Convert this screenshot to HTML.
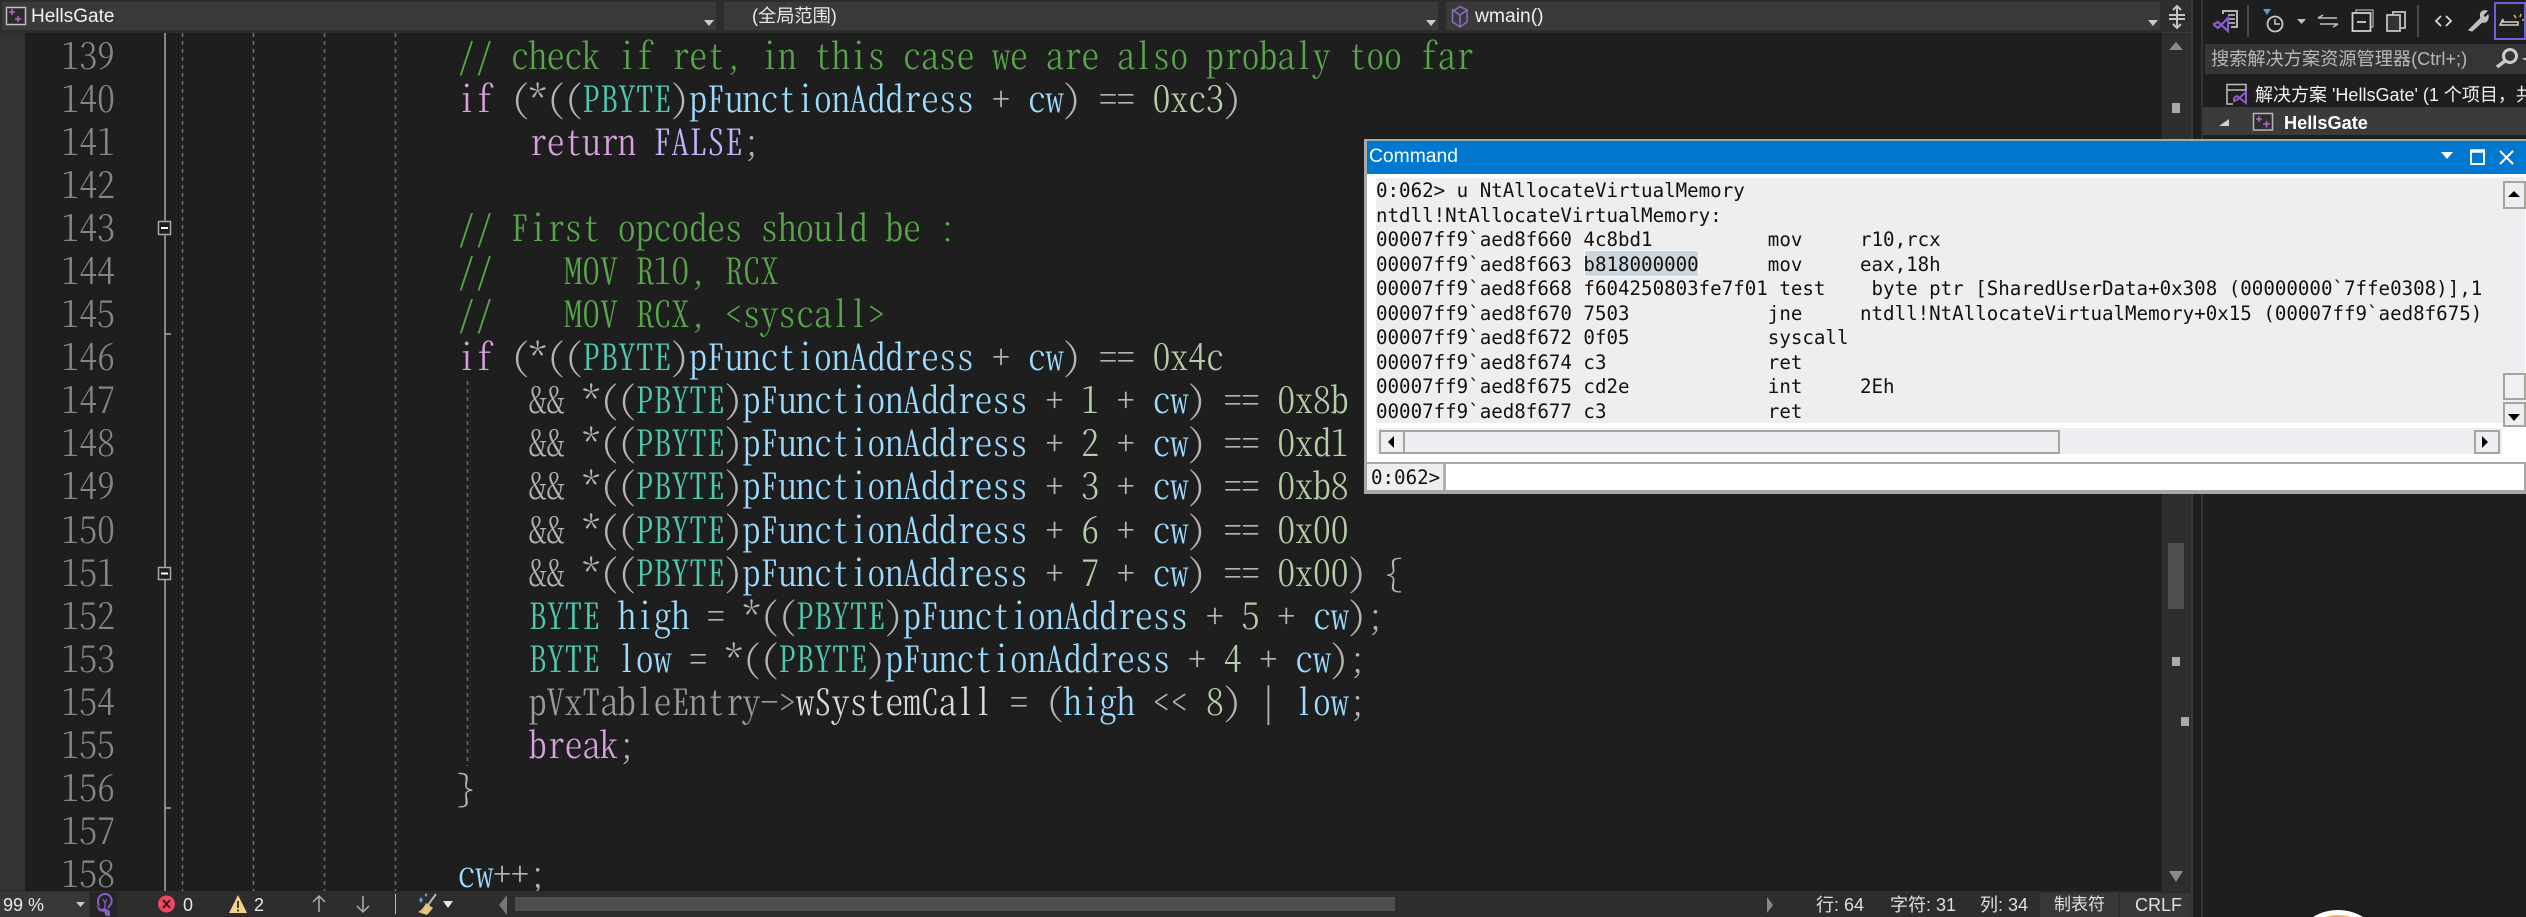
<!DOCTYPE html>
<html lang="zh"><head><meta charset="utf-8"><title>HellsGate</title>
<style>
html,body{margin:0;padding:0;width:2526px;height:917px;overflow:hidden;background:#1e1e1e}
.a{position:absolute}
body{position:relative;font-family:"Liberation Sans","Noto Sans CJK SC",sans-serif}
#page{position:absolute;left:0;top:0;width:2526px;height:917px;overflow:hidden}
.t{position:absolute;white-space:pre;line-height:1}
#nums,#code{position:absolute;top:0;font-family:"Noto Serif CJK SC",serif;font-feature-settings:"hwid";font-size:35.65px;font-weight:300;line-height:43.05px;white-space:pre}
#nums{left:61.5px;color:#858585}
#code{left:457.5px;color:#b4b4b4}
.c{color:#57a64a}.k{color:#d8a0df}.m{color:#beb7ff}.y{color:#4ec9b0}.v{color:#9cdcfe}.n{color:#b5cea8}.d{color:#9b9b9b}.w{color:#dadada}
#cmd{position:absolute;left:1376px;top:179px;font-family:"DejaVu Sans Mono","Liberation Mono",monospace;font-size:19.15px;line-height:24.55px;color:#111;white-space:pre}
.box{position:absolute;box-sizing:border-box;border:2px solid #a8a49c;background:#edeef2}
</style></head><body><div id="page">
<!-- top bar -->
<div class="a" style="left:0;top:0;width:2162px;height:33px;background:#2d2d2d"></div>
<div class="a" style="left:2px;top:2px;width:714px;height:28px;background:#3a3a3a"></div>
<div class="a" style="left:724px;top:2px;width:714px;height:28px;background:#3a3a3a"></div>
<div class="a" style="left:1446px;top:2px;width:714px;height:28px;background:#3a3a3a"></div>
<div class="t" style="left:31px;top:7px;font-size:19px;color:#f0f0f0">HellsGate</div>
<div class="t" style="left:752px;top:7px;font-size:18.2px;color:#e8e8e8">(全局范围)</div>
<div class="t" style="left:1475px;top:7px;font-size:19.3px;color:#f0f0f0">wmain()</div>

<!-- margins -->
<div class="a" style="left:0;top:33px;width:25px;height:858px;background:#333"></div>

<!-- editor graphics -->
<svg class="a" style="left:0;top:0" width="2526" height="917" viewBox="0 0 2526 917">
<g stroke="#6e6e6e" stroke-width="1.5" stroke-dasharray="4 4" fill="none">
<path d="M182.500 33V891M253.500 33V891M324.500 33V891M395.500 33V891M467.500 381V766"/>
</g>
<g stroke="#a8a8a8" stroke-width="1.500" fill="none">
<path d="M165 33V221M165 234V567M165 579V891M165 334H171M165 808H171"/>
<rect x="158.500" y="221.500" width="12" height="13"/>
<rect x="158.500" y="567.500" width="12" height="12"/>
</g>
<path d="M161 228H168M161 573.500H168" stroke="#fff" stroke-width="2"/>
<!-- small top icons -->
<rect x="6.500" y="7.500" width="19" height="17" fill="#2b2b2b" stroke="#c0c0c0" stroke-width="1.500"/>
<path d="M9 12H15M12 9V15M15 19H21M18 16V22" stroke="#b765cf" stroke-width="1.500"/>
<path d="M1455 12L1460 8.500L1467 12V24L1460 29L1452.500 24V12ZM1452.500 12L1460 17V29M1460 17L1467 12" transform="translate(0 -2)" fill="none" stroke="#8c6cc4" stroke-width="1.500"/>
<path d="M704 21H714L709 27Z" transform="translate(0 -1)" fill="#ccc"/>
<path d="M1426 21H1436L1431 27Z" transform="translate(0 -1)" fill="#ccc"/>
<path d="M2148 21H2158L2153 27Z" transform="translate(0 -1)" fill="#ccc"/>
</svg>

<!-- code -->
<div class="a" style="left:0;top:33px;width:2162px;height:858px;overflow:hidden">
<div id="nums">139
140
141
142
143
144
145
146
147
148
149
150
151
152
153
154
155
156
157
158</div>
<div id="code"><span class="c">// check if ret, in this case we are also probaly too far</span>
<span class="k">if</span> (*((<span class="y">PBYTE</span>)<span class="v">pFunctionAddress</span> + <span class="v">cw</span>) == <span class="n">0xc3</span>)
    <span class="k">return</span> <span class="m">FALSE</span>;

<span class="c">// First opcodes should be :</span>
<span class="c">//    MOV R10, RCX</span>
<span class="c">//    MOV RCX, &lt;syscall&gt;</span>
<span class="k">if</span> (*((<span class="y">PBYTE</span>)<span class="v">pFunctionAddress</span> + <span class="v">cw</span>) == <span class="n">0x4c</span>
    &amp;&amp; *((<span class="y">PBYTE</span>)<span class="v">pFunctionAddress</span> + <span class="n">1</span> + <span class="v">cw</span>) == <span class="n">0x8b</span>
    &amp;&amp; *((<span class="y">PBYTE</span>)<span class="v">pFunctionAddress</span> + <span class="n">2</span> + <span class="v">cw</span>) == <span class="n">0xd1</span>
    &amp;&amp; *((<span class="y">PBYTE</span>)<span class="v">pFunctionAddress</span> + <span class="n">3</span> + <span class="v">cw</span>) == <span class="n">0xb8</span>
    &amp;&amp; *((<span class="y">PBYTE</span>)<span class="v">pFunctionAddress</span> + <span class="n">6</span> + <span class="v">cw</span>) == <span class="n">0x00</span>
    &amp;&amp; *((<span class="y">PBYTE</span>)<span class="v">pFunctionAddress</span> + <span class="n">7</span> + <span class="v">cw</span>) == <span class="n">0x00</span>) {
    <span class="y">BYTE</span> <span class="v">high</span> = *((<span class="y">PBYTE</span>)<span class="v">pFunctionAddress</span> + <span class="n">5</span> + <span class="v">cw</span>);
    <span class="y">BYTE</span> <span class="v">low</span> = *((<span class="y">PBYTE</span>)<span class="v">pFunctionAddress</span> + <span class="n">4</span> + <span class="v">cw</span>);
    <span class="d">pVxTableEntry-&gt;</span><span class="w">wSystemCall</span> = (<span class="v">high</span> &lt;&lt; <span class="n">8</span>) | <span class="v">low</span>;
    <span class="k">break</span>;
}

<span class="v">cw</span>++;</div>
</div>

<!-- editor vertical scrollbar -->
<div class="a" style="left:2162px;top:0;width:29px;height:891px;background:#2e2e2e"></div>
<div class="a" style="left:2162px;top:32px;width:29px;height:1px;background:#3a3a3a"></div>
<div class="a" style="left:2191px;top:0;width:2px;height:917px;background:#3a3a3a"></div>
<div class="a" style="left:2201px;top:0;width:2px;height:917px;background:#333"></div>
<div class="a" style="left:2168px;top:543px;width:16px;height:66px;background:#4f4f4f"></div>
<div class="a" style="left:2172px;top:103px;width:8px;height:10px;background:#aaa"></div>
<div class="a" style="left:2172px;top:657px;width:8px;height:9px;background:#aaa"></div>
<div class="a" style="left:2181px;top:717px;width:8px;height:9px;background:#aaa"></div>
<svg class="a" style="left:2162px;top:0" width="29" height="891" viewBox="0 0 29 891">
<path d="M7 50H21L14 42Z" fill="#8a8a8a"/>
<path d="M7 871H21L14 882Z" fill="#8a8a8a"/>
<path d="M15 6V28M7 15H23M7 19H23M11 10L15 6L19 10M11 24L15 28L19 24" stroke="#c4c4c4" stroke-width="2" fill="none"/>
</svg>

<!-- solution explorer -->
<div class="a" style="left:2205px;top:44px;width:321px;height:30px;background:#353535"></div>
<div class="t" style="left:2211px;top:50px;font-size:18.2px;color:#b8b8b8">搜索解决方案资源管理器(Ctrl+;)</div>
<div class="a" style="left:2203px;top:107px;width:323px;height:28px;background:#3b3b3b"></div>
<div class="a" style="left:2203px;top:76px;width:323px;height:31px;overflow:hidden"><div class="t" style="left:52px;top:10px;font-size:18px;color:#f0f0f0">解决方案 'HellsGate' (1 个项目，共 1 个)</div></div>
<div class="t" style="left:2284px;top:114px;font-size:18.2px;font-weight:bold;color:#fff">HellsGate</div>
<svg class="a" style="left:2203px;top:0" width="323" height="140" viewBox="2203 0 323 140">
<!-- VS doc icon -->
<path d="M2223 14V11H2237V27H2231" fill="none" stroke="#c8c8c8" stroke-width="1.800"/>
<path d="M2228 15H2235M2228 19H2235M2228 23H2235" stroke="#c8c8c8" stroke-width="1.500"/>
<path d="M2214 24L2218 22L2228 31V18L2218 28L2214 25Z" fill="none" stroke="#8a5cc9" stroke-width="2.200"/>
<path d="M2248 5V37" stroke="#4a4a4a" stroke-width="2"/>
<!-- clock -->
<path d="M2263 9H2271L2267 15Z" fill="#4aa3e0"/>
<circle cx="2275" cy="24" r="7.500" fill="none" stroke="#c8c8c8" stroke-width="1.800"/>
<path d="M2275 19V24H2280" fill="none" stroke="#c8c8c8" stroke-width="1.500"/>
<path d="M2297 19H2306L2301.500 24Z" fill="#c0c0c0"/>
<!-- sync -->
<path d="M2318 18H2337M2318 18L2323 15M2320 24H2338M2338 24L2333 27" fill="none" stroke="#c0c0c0" stroke-width="1.500"/>
<!-- collapse -->
<path d="M2356 13V10H2373V27H2370" fill="none" stroke="#aaa" stroke-width="1.300"/>
<rect x="2352.500" y="13" width="18" height="18" fill="none" stroke="#d0d0d0" stroke-width="1.800"/>
<path d="M2357 22H2366" stroke="#d0d0d0" stroke-width="1.800"/>
<!-- copies -->
<rect x="2393" y="12" width="12" height="16" fill="none" stroke="#c0c0c0" stroke-width="1.800"/>
<rect x="2387" y="15" width="13" height="16" fill="#333" stroke="#c0c0c0" stroke-width="1.800"/>
<path d="M2418 5V37" stroke="#4a4a4a" stroke-width="2"/>
<path d="M2441 16L2436 21L2441 26M2446 16L2451 21L2446 26" fill="none" stroke="#d8d8d8" stroke-width="1.800"/>
<!-- wrench -->
<path d="M2469 30L2481 18C2479 13 2482 10 2487 11L2483 15L2485 18L2488 15C2489 20 2486 23 2482 22L2472 31Z" fill="#bbb" stroke="#ccc"/>
<rect x="2495" y="3" width="30" height="36" fill="none" stroke="#6a60d8" stroke-width="2"/>
<path d="M2500 25H2518V22H2503V19L2500 25Z" fill="none" stroke="#d0d0d0" stroke-width="1.500"/>
<path d="M2514 15L2516 18M2522 20H2524M2521 14L2520 17" stroke="#e8c060" stroke-width="1.500"/>
<!-- search -->
<circle cx="2510" cy="56" r="6.500" fill="none" stroke="#ccc" stroke-width="3"/>
<path d="M2505 61L2497 67" stroke="#ccc" stroke-width="3.500"/>
<path d="M2522 58H2526V60H2524Z" fill="#bbb"/>
<!-- solution icon -->
<path d="M2246 94V84.500H2227V104H2233M2227 90H2246" fill="none" stroke="#bdbdbd" stroke-width="1.500"/>
<path d="M2234 98L2237 96L2246 103V92L2237 100L2234 101Z" fill="none" stroke="#8a5cc9" stroke-width="2"/>
<!-- triangle -->
<path d="M2229 119V126H2219Z" fill="#cfcfcf"/>
<!-- project icon -->
<rect x="2253.500" y="113.500" width="19" height="16.500" fill="#2d2d2d" stroke="#b8b8b8" stroke-width="1.500"/>
<path d="M2256 119H2262M2259 116V122M2263 124H2270M2266.500 121V127.500" stroke="#b765cf" stroke-width="1.500"/>
</svg>

<!-- avatar top edge, drawn only down to the frame bottom -->
<svg class="a" style="left:2300px;top:905px" width="76" height="12" viewBox="2300 905 76 12">
<path d="M2313 917A48 48 0 0 1 2363 917Z" fill="#fff"/>
<path d="M2325 917A43 43 0 0 1 2351 917Z" fill="#f7b26a"/>
</svg>

<!-- Command window -->
<div class="a" style="left:1364px;top:139px;width:1162px;height:355px;background:#fff;box-sizing:border-box;border:solid #a8a8a8;border-width:2px 0 4px 3px"></div>
<div class="a" style="left:1367px;top:141px;width:1159px;height:33px;background:#0078cf"></div>
<div class="t" style="left:1369px;top:147px;font-size:19.3px;color:#fff">Command</div>
<svg class="a" style="left:2430px;top:141px" width="96" height="33" viewBox="2430 141 96 33">
<path d="M2441 152H2453L2447 159Z" fill="#fff"/>
<rect x="2471" y="151" width="13" height="13" fill="none" stroke="#fff" stroke-width="2"/>
<path d="M2470 151H2485" stroke="#fff" stroke-width="3.500"/>
<path d="M2500 151L2513 164M2513 151L2500 164" stroke="#fff" stroke-width="2"/>
</svg>
<div class="a" style="left:1376px;top:178px;width:1127px;height:245px;background:#eee"></div>
<div class="a" style="left:1584px;top:250px;width:115px;height:27px;box-sizing:border-box;border:1px solid #fafafa;background:#cdd6dd"></div>
<div id="cmd">0:062&gt; u NtAllocateVirtualMemory
ntdll!NtAllocateVirtualMemory:
00007ff9`aed8f660 4c8bd1          mov     r10,rcx
00007ff9`aed8f663 b818000000      mov     eax,18h
00007ff9`aed8f668 f604250803fe7f01 test    byte ptr [SharedUserData+0x308 (00000000`7ffe0308)],1
00007ff9`aed8f670 7503            jne     ntdll!NtAllocateVirtualMemory+0x15 (00007ff9`aed8f675)
00007ff9`aed8f672 0f05            syscall
00007ff9`aed8f674 c3              ret
00007ff9`aed8f675 cd2e            int     2Eh
00007ff9`aed8f677 c3              ret</div>
<!-- cmd vscroll -->
<div class="a" style="left:2503px;top:177px;width:22px;height:250px;background:#edeef2"></div>
<div class="box" style="left:2503px;top:181px;width:23px;height:28px"></div>
<div class="box" style="left:2503px;top:373px;width:23px;height:27px;background:#f0f0f4"></div>
<div class="box" style="left:2503px;top:402px;width:23px;height:25px"></div>
<svg class="a" style="left:2503px;top:177px" width="23" height="250" viewBox="0 0 23 250">
<path d="M5 20H17L11 14Z" fill="#000"/>
<path d="M5 237H17L11 244Z" fill="#000"/>
</svg>
<!-- cmd hscroll -->
<div class="a" style="left:1376px;top:428px;width:1126px;height:26px;background:#edeef2"></div>
<div class="box" style="left:1379px;top:430px;width:26px;height:24px"></div>
<div class="box" style="left:1403px;top:430px;width:657px;height:24px"></div>
<div class="box" style="left:2474px;top:430px;width:26px;height:24px"></div>
<svg class="a" style="left:1379px;top:430px" width="1121" height="24" viewBox="0 0 1121 24">
<path d="M15 6V18L9 12Z" fill="#000"/>
<path d="M1103 6V18L1109 12Z" fill="#000"/>
</svg>
<!-- cmd input -->
<div class="a" style="left:1367px;top:462px;width:1159px;height:2px;background:#a8a8a8"></div>
<div class="a" style="left:1367px;top:464px;width:76px;height:26px;background:#eee"></div>
<div class="a" style="left:1443px;top:464px;width:3px;height:26px;background:#b0b0b0"></div>
<div class="a" style="left:2524px;top:464px;width:2px;height:26px;background:#a8a8a8"></div>
<div class="t" style="left:1371px;top:468px;font-family:'DejaVu Sans Mono',monospace;font-size:19.15px;color:#111">0:062&gt;</div>

<!-- status bar -->
<div class="a" style="left:0;top:891px;width:2191px;height:26px;background:#2d2d2d;overflow:hidden">
<div class="a" style="left:0;top:1px;width:89px;height:25px;background:#383838"></div>
<div class="a" style="left:90px;top:1px;width:27px;height:25px;background:#252525"></div>
<div class="a" style="left:515px;top:6px;width:880px;height:14px;background:#4f4f4f"></div>
<div class="a" style="left:2040px;top:2px;width:78px;height:24px;background:#383838"></div>
<div class="a" style="left:2120px;top:2px;width:70px;height:24px;background:#383838"></div>
<div class="t" style="left:3px;top:5px;font-size:18px;color:#e8e8e8">99 %</div>
<div class="t" style="left:183px;top:5px;font-size:18px;color:#e8e8e8">0</div>
<div class="t" style="left:254px;top:5px;font-size:18px;color:#e8e8e8">2</div>
<div class="t" style="left:1816px;top:5px;font-size:18px;color:#e0e0e0">行: 64</div>
<div class="t" style="left:1890px;top:5px;font-size:18px;color:#e0e0e0">字符: 31</div>
<div class="t" style="left:1980px;top:5px;font-size:18px;color:#e0e0e0">列: 34</div>
<div class="t" style="left:2054px;top:5px;font-size:17px;color:#e0e0e0">制表符</div>
<div class="t" style="left:2135px;top:5px;font-size:18px;color:#e0e0e0">CRLF</div>
<svg class="a" style="left:0;top:0" width="1800" height="26" viewBox="0 891 1800 26">
<path d="M76 902H85L80.500 907Z" fill="#ccc"/>
<path d="M99 906C96 899 100 894 105 894C110 894 113 899 111 904L108 908" fill="none" stroke="#8a5cc9" stroke-width="2"/>
<path d="M103 899L105 903L107 899M105 903V908" fill="none" stroke="#8a5cc9" stroke-width="1.200"/>
<path d="M96 905L99 911L104 912L106 916H110L110 911L105 908L101 909Z" fill="#8a5cc9"/>
<circle cx="166.500" cy="904" r="8.500" fill="#ec4a5e"/>
<path d="M163 900L170 908M170 900L163 908" stroke="#401018" stroke-width="1.800"/>
<path d="M238 895L247 913H229Z" fill="#f2d38c"/>
<path d="M238 901V908M238 909.500V911.500" stroke="#3a3020" stroke-width="1.800"/>
<path d="M319 912V896M313 902L319 896L325 902M363 896V912M357 906L363 912L369 906" fill="none" stroke="#b0b0b0" stroke-width="1.500"/>
<path d="M395.500 894V914" stroke="#c0c0c0"/>
<path d="M436 894L428 905" stroke="#b8b8b8" stroke-width="2"/>
<path d="M426 903L433 908L427 915L418 912C422 910 424 907 426 903Z" fill="#e2c878"/>
<path d="M421 897L423 900L421 903L419 900Z M426 893L427.500 895L426 897L424.500 895Z" fill="#5aa3e8"/>
<path d="M443 901H453L448 908Z" fill="#e8e8e8"/>
<path d="M507 896V916L499 906Z" transform="translate(0 -1)" fill="#777"/>
<path d="M1767 897V913L1773 905Z" fill="#888"/>
</svg>
</div>
</div></body></html>
